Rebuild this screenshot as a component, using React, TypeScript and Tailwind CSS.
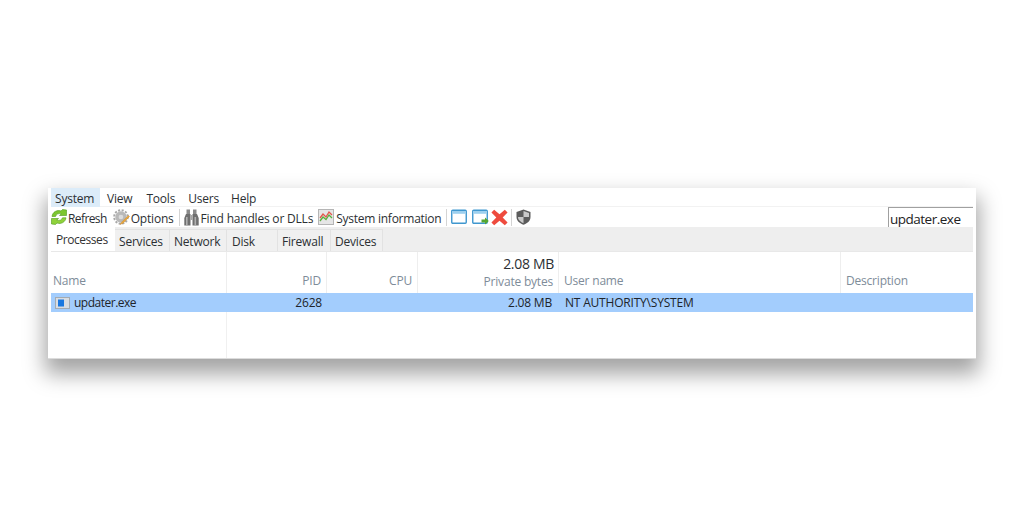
import React from "react";

const Refresh = () => (
  <svg width="16" height="16" viewBox="0 0 16 16" className="shrink-0">
    <path d="M1 7.5 C1.5 3 6 0.5 10 2 L11.5 0.5 L15.5 1 L15.5 6.5 L8.5 6.5 L10.2 5 C7.5 4 5.3 5 4.5 7.5 Z" fill="#7cc62f" stroke="#4f9a1c" strokeWidth="0.6" />
    <path d="M15 8.8 C14.5 13 10 15.6 6 14 L4.5 15.5 L0.5 15 L0.5 9.5 L7.5 9.5 L5.8 11 C8.5 12 10.8 11 11.5 8.8 Z" fill="#8fd23a" stroke="#4f9a1c" strokeWidth="0.6" />
  </svg>
);

const Gear = () => (
  <svg width="17" height="17" viewBox="0 0 16 16" className="shrink-0">
    <circle cx="7.5" cy="7.5" r="5.4" fill="#b9b9b9" />
    <circle cx="7.5" cy="7.5" r="6.4" fill="none" stroke="#a8a8a8" strokeWidth="1.8" strokeDasharray="2 1.4" />
    <circle cx="7.5" cy="7.5" r="2.2" fill="#dcdcdc" />
    <path d="M14.5 6 L8.5 12 L6.5 14.5 L9.5 13.5 L15.5 7 Z" fill="#e9a73c" stroke="#c9862a" strokeWidth="0.4" />
  </svg>
);

const Binoculars = () => (
  <svg width="15" height="17" viewBox="0 0 15 17" className="shrink-0">
    <rect x="2.5" y="0.5" width="3.5" height="4.5" fill="#8a8a8a" />
    <rect x="9" y="0.5" width="3.5" height="4.5" fill="#8a8a8a" />
    <path d="M2 5 H6.5 V16.5 H0.3 V9 Z" fill="#6f6f6f" />
    <path d="M8.5 5 H13 L14.7 9 V16.5 H8.5 Z" fill="#6f6f6f" />
    <rect x="6.5" y="6" width="2" height="5" fill="#a5a5a5" />
    <rect x="2" y="8" width="1.6" height="8" fill="#b0b0b0" />
    <rect x="10.5" y="8" width="1.6" height="8" fill="#b0b0b0" />
  </svg>
);

const SysInfo = () => (
  <svg width="16" height="16" viewBox="0 0 16 16" className="shrink-0">
    <rect x="0.5" y="0.5" width="15" height="15" fill="#e6e6e6" stroke="#b5b5b5" />
    <path d="M2 9 L5 5 L8 8 L11 3 L14 6" fill="none" stroke="#e2574c" strokeWidth="1.3" />
    <path d="M2 12 L5 8 L8 10.5 L11 6 L14 9" fill="none" stroke="#58b03c" strokeWidth="1.3" />
  </svg>
);

const Win = ({ arrow }: { arrow?: boolean }) => (
  <svg width="17" height="16" viewBox="0 0 17 16" className="shrink-0">
    <rect x="0.75" y="1.25" width="14.5" height="13" rx="1" fill="#fff" stroke="#3f97cf" strokeWidth="1.4" />
    <rect x="1.5" y="2" width="13" height="2.8" fill="#9dd0ef" />
    {arrow ? <path d="M9.5 10.5 H13 V8.5 L16.8 12 L13 15.5 V13.5 H9.5 Z" fill="#55a630" /> : null}
  </svg>
);

const CloseX = () => (
  <svg width="17" height="17" viewBox="0 0 16 16" className="shrink-0">
    <path d="M3 0.8 L8 5 L13 0.8 L15.6 3.4 L11 8 L15.6 12.8 L13 15.4 L8 11 L3 15.4 L0.4 12.8 L5 8 L0.4 3.4 Z" fill="#ee4b3e" />
  </svg>
);

const Shield = () => (
  <svg width="15" height="16" viewBox="0 0 15 16" className="shrink-0">
    <path d="M7.5 0.5 L14.5 3 V8 C14.5 12 11 14.5 7.5 15.8 C4 14.5 0.5 12 0.5 8 V3 Z" fill="#5c5c5c" />
    <path d="M7.5 2 L13 4 V8 H7.5 Z" fill="#c9c9c9" />
    <path d="M7.5 8 V14.2 C4.8 13 2 11.2 2 8 Z" fill="#c9c9c9" />
  </svg>
);

const ProcIcon = () => (
  <svg width="15" height="12" viewBox="0 0 15 12" className="shrink-0">
    <rect x="0.5" y="0.5" width="14" height="11" fill="#d8dde3" stroke="#a3abb3" />
    <rect x="3" y="2.5" width="6" height="7" fill="#1a78e0" />
  </svg>
);

const Sep = () => <div className="h-[17px] w-px shrink-0 bg-[#d4d4d4]" />;

const tabs: [string, string, string][] = [
  ["Services", "w-[55px]", "pl-[4px]"],
  ["Network", "w-[57px]", "pl-[4px]"],
  ["Disk", "w-[51px]", "pl-[5px]"],
  ["Firewall", "w-[53px]", "pl-[4px]"],
  ["Devices", "w-[52px]", "pl-[4px]"],
];

export default function App() {
  return (
    <div className="h-[524px] w-[1024px] overflow-hidden bg-white pl-[48px] pt-[188px] font-['Open_Sans','Noto_Sans',sans-serif] text-[12px] tracking-[-0.2px] text-[#2b2f33]">
      <div className="flex h-[171px] w-[928px] flex-col border-b border-[#dcdcdc] bg-white px-[3px] shadow-[0_12px_20px_3px_rgba(0,0,0,0.36)]">
        <div className="flex h-[19px] items-center border-b border-[#f2f2f2] pt-[3px]">
          <div className="-mt-[3px] flex h-[19px] w-[49px] items-center bg-[#dcecf9] pl-[4px] pt-[3px]">System</div>
          <div className="ml-[7px]">View</div>
          <div className="ml-[14px]">Tools</div>
          <div className="ml-[13px]">Users</div>
          <div className="ml-[12px]">Help</div>
        </div>
        <div className="flex h-[20px] items-center">
          <Refresh />
          <span className="ml-[1px] pt-[4px] tracking-[-0.6px]">Refresh</span>
          <div className="ml-[6px]"><Gear /></div>
          <span className="ml-[1px] pt-[4px]">Options</span>
          <div className="ml-[5px]"><Sep /></div>
          <div className="ml-[4px]"><Binoculars /></div>
          <span className="ml-[2px] pt-[4px]">Find handles or DLLs</span>
          <div className="ml-[5px]"><SysInfo /></div>
          <span className="ml-[2px] pt-[4px] tracking-[-0.25px]">System information</span>
          <div className="ml-[5px]"><Sep /></div>
          <div className="ml-[4px]"><Win /></div>
          <div className="ml-[4px]"><Win arrow /></div>
          <div className="ml-[2px]"><CloseX /></div>
          <div className="ml-[3px]"><Sep /></div>
          <div className="ml-[4px]"><Shield /></div>
          <div className="ml-auto flex h-[20px] w-[85px] items-center border-l border-t border-[#a0a0a0] pl-[1px] pt-[4px] text-[13.5px] leading-none tracking-[-0.5px] text-[#222]">updater.exe</div>
        </div>
        <div className="flex h-[24px] items-end bg-[#eeeeee]">
          <div className="flex h-[24px] w-[64px] items-center justify-start bg-white pl-[5px] pt-[1px] tracking-[-0.45px] text-[#333]">Processes</div>
          {tabs.map(([t, w, p]) => (
            <div key={t} className={`flex h-[22px] ${w} ${p} items-center border-r border-t border-[#e2e2e2] bg-[#f0f0f0] pt-[2px]`}>
              {t}
            </div>
          ))}
        </div>
        <div className="flex h-[42px] border-t border-[#e8e8e8] text-[#7e8c99]">
          <div className="flex w-[176px] items-end border-r border-[#eeeeee] pb-[3px] pl-[2px]">Name</div>
          <div className="flex w-[100px] items-end justify-end border-r border-[#eeeeee] pb-[3px] pr-[5px]">PID</div>
          <div className="flex w-[91px] items-end justify-end border-r border-[#eeeeee] pb-[3px] pr-[5px]">CPU</div>
          <div className="flex w-[141px] flex-col items-end justify-end border-r border-[#eeeeee] pb-[3px] pr-[5px]">
            <span className="-mr-[1px] text-[14px] leading-[20px] tracking-[-0.3px] text-[#2b2f33]">2.08 MB</span>
            <span className="leading-[16px]">Private bytes</span>
          </div>
          <div className="flex w-[282px] items-end border-r border-[#eeeeee] pb-[3px] pl-[5px]">User name</div>
          <div className="flex flex-1 items-end pb-[3px] pl-[5px]">Description</div>
        </div>
        <div className="flex h-[19px] items-center bg-[#a3cdfd] pt-[1px] text-[#20242a]">
          <div className="flex w-[176px] items-center pl-[4px]">
            <ProcIcon />
            <span className="ml-[4px] tracking-[-0.5px]">updater.exe</span>
          </div>
          <div className="w-[100px] pr-[5px] text-right">2628</div>
          <div className="w-[91px]" />
          <div className="w-[141px] pr-[7px] text-right">2.08 MB</div>
          <div className="flex-1 pl-[6px]">NT AUTHORITY\SYSTEM</div>
        </div>
        <div className="flex-1">
          <div className="h-full w-[176px] border-r border-[#f0f0f0]" />
        </div>
      </div>
    </div>
  );
}
